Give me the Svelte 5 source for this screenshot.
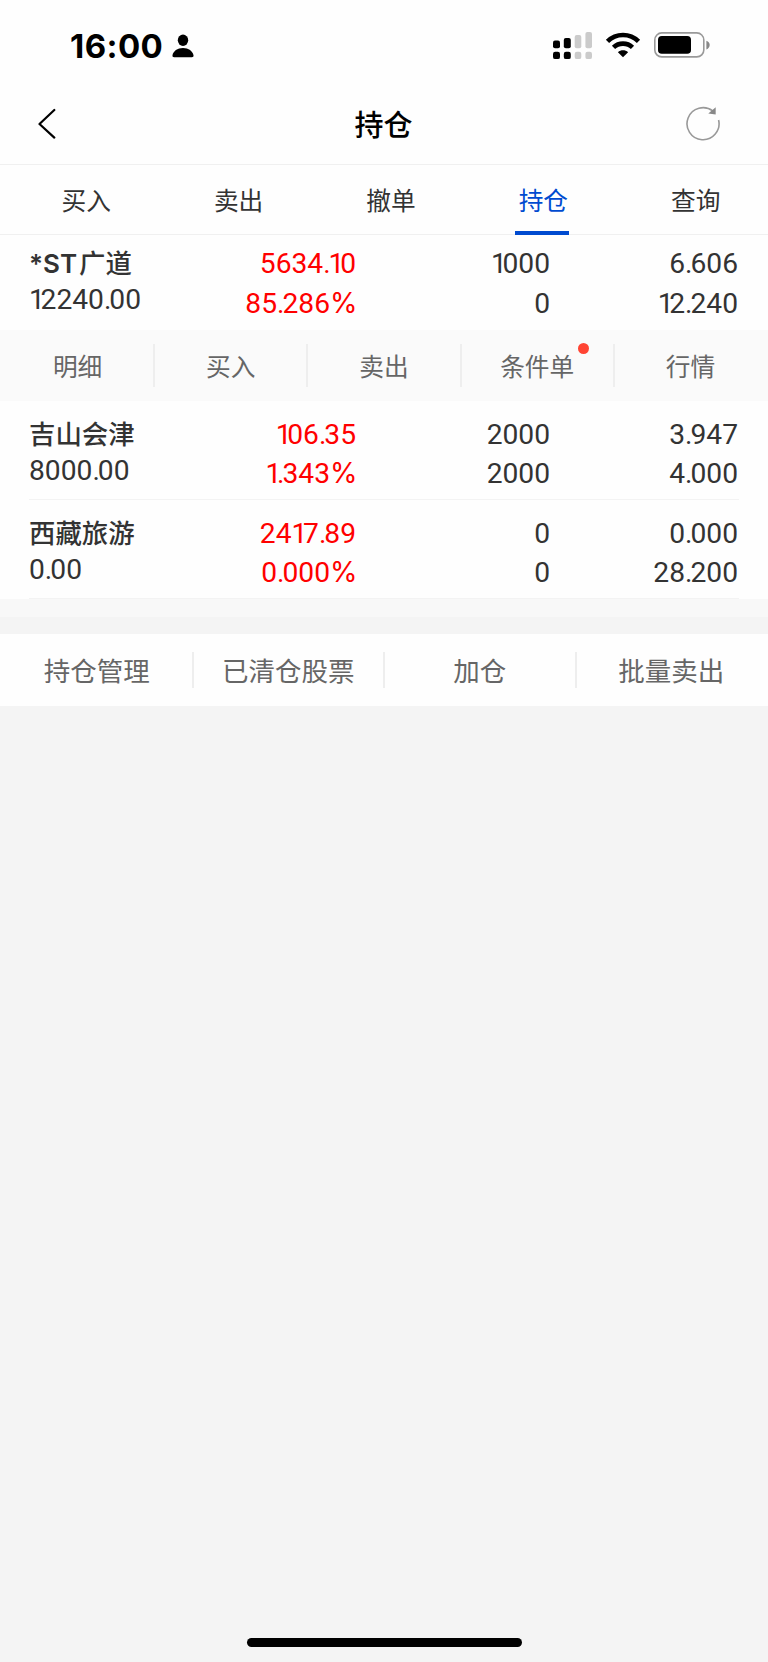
<script lang="ts">
  type Holding = {
    prefix?: string;
    name: string;
    value: string;
    profit: string;
    rate: string;
    amount: string;
    available: string;
    cost: string;
    price: string;
  };

  const tabs = ['买入', '卖出', '撤单', '持仓', '查询'];
  const actions = ['明细', '买入', '卖出', '条件单', '行情'];
  const tools = ['持仓管理', '已清仓股票', '加仓', '批量卖出'];

  const holdings: Holding[] = [
    { prefix: '*ST', name: '广道', value: '12240.00', profit: '5634.10', rate: '85.286%', amount: '1000', available: '0', cost: '6.606', price: '12.240' },
    { name: '吉山会津', value: '8000.00', profit: '106.35', rate: '1.343%', amount: '2000', available: '2000', cost: '3.947', price: '4.000' },
    { name: '西藏旅游', value: '0.00', profit: '2417.89', rate: '0.000%', amount: '0', available: '0', cost: '0.000', price: '28.200' }
  ];

  let activeTab = $state('持仓');
  let expanded = $state(0);
</script>

<!-- the "1" and the point are set tighter than the other figures -->
{#snippet num(text: string)}
  <span class="num">{#each text as ch}<span class:one={ch === '1'} class:dot={ch === '.'} class:pct={ch === '%'}>{ch}</span>{/each}</span>
{/snippet}

<div class="screen">
  <div class="status">
    <span class="clock">16:00</span>
    <svg class="person" width="22" height="24" viewBox="0 0 22 24">
      <ellipse cx="11" cy="6.2" rx="5.2" ry="5.7" />
      <path d="M2.2 23.2C.8 23.2.3 22.5.5 21.3 1.2 17 5.5 13.9 11 13.9s9.8 3.1 10.5 7.4c.2 1.2-.3 1.9-1.7 1.9z" />
    </svg>
    <svg class="signal" width="40" height="28" viewBox="0 0 40 28">
      <rect x="0" y="8.5" width="7" height="7.8" rx="2" />
      <rect x="10.8" y="6" width="7" height="10.3" rx="2" />
      <g fill="#cbcbcb">
        <rect x="21.7" y="3" width="6.6" height="13.3" rx="2" />
        <rect x="32.4" y="0" width="6.6" height="16.3" rx="2" />
        <rect x="21.7" y="19.8" width="6.6" height="7.3" rx="2.2" />
        <rect x="32.4" y="19.8" width="6.6" height="7.3" rx="2.2" />
      </g>
      <rect x="0" y="19.8" width="7" height="7.3" rx="2.2" />
      <rect x="10.8" y="19.8" width="7" height="7.3" rx="2.2" />
    </svg>
    <svg class="wifi" width="36" height="26" viewBox="0 0 36 26">
      <g fill="none" stroke="#000" stroke-width="4.6">
        <path d="M2.5 9.3C11 .8 25 .8 33.5 9.3" />
        <path d="M8.5 15.4c5.3-5 13.7-5 19 0" />
      </g>
      <path d="M18 25.2l-5.1-4.9c2.9-2.6 7.3-2.6 10.2 0z" />
    </svg>
    <svg class="battery" width="56" height="26" viewBox="0 0 56 26">
      <rect x=".8" y=".9" width="49" height="24" rx="7" fill="none" stroke="#999" stroke-width="1.6" />
      <rect x="4" y="4.1" width="33" height="17.6" rx="3.8" />
      <path d="M52.4 8.8c4.4 1.2 4.4 7.4 0 8.6z" fill="#888" />
    </svg>
  </div>

  <header>
    <button class="back" aria-label="返回">
      <svg width="18" height="32" viewBox="0 0 18 32" fill="none" stroke="#000" stroke-width="2.2" stroke-linecap="round" stroke-linejoin="round">
        <path d="M16.3 2L1.5 16l14.8 13.6" />
      </svg>
    </button>
    <h1>持仓</h1>
    <button class="refresh" aria-label="刷新">
      <svg width="36" height="36" viewBox="0 0 36 36">
        <path d="M28 5.2A16 16 0 1 0 33.6 14" fill="none" stroke="#999" stroke-width="1.6" />
        <path d="M30.7 1.2v7.4l-7.4-1z" fill="#888" />
      </svg>
    </button>
  </header>

  <nav class="tabs">
    {#each tabs as tab}
      <button class="tab" class:active={tab === activeTab} onclick={() => (activeTab = tab)}>{tab}</button>
    {/each}
  </nav>

  <main>
    {#each holdings as item, i}
      <div class="holding" class:expanded={i === expanded} class:first={i === 0}>
        <div class="col left">
          <span class="name">{#if item.prefix}<span class="prefix">{item.prefix}</span>{/if}{item.name}</span>
          {@render num(item.value)}
        </div>
        <div class="col red">
          {@render num(item.profit)}
          {@render num(item.rate)}
        </div>
        <div class="col">
          {@render num(item.amount)}
          {@render num(item.available)}
        </div>
        <div class="col">
          {@render num(item.cost)}
          {@render num(item.price)}
        </div>
      </div>
      {#if i === expanded}
        <div class="actions">
          {#each actions as action}
            <button class="action"><span class:badge={action === '条件单'}>{action}</span></button>
          {/each}
        </div>
      {/if}
    {/each}
  </main>

  <div class="gap"></div>

  <div class="tools">
    {#each tools as tool}
      <button class="tool">{tool}</button>
    {/each}
  </div>

  <div class="home"></div>
</div>

<style>
  :global(body) {
    background: #f4f4f4;
  }

  .screen {
    display: flex;
    flex-direction: column;
    width: 768px;
    height: 1662px;
    overflow: hidden;
    background: #f4f4f4;
    color: #333;
    font-family: Roboto, 'Noto Sans CJK SC', sans-serif;
  }

  button {
    padding: 0;
    border: none;
    background: none;
    color: inherit;
    font-family: 'Noto Sans CJK SC', sans-serif;
    cursor: pointer;
  }

  svg {
    display: block;
  }

  .status {
    display: flex;
    align-items: flex-start;
    height: 84px;
    box-sizing: border-box;
    padding: 32px 60px 0 70px;
    background: #fefefe;
  }

  .clock {
    width: 94px;
    margin-top: -1px;
    font: 700 33px/30px Inter, sans-serif;
    letter-spacing: 0.4px;
    color: #000;
    white-space: nowrap;
  }

  .person {
    margin: 2px 0 0 8px;
  }

  .signal {
    margin-left: auto;
  }

  .wifi {
    margin: 0 0 0 12px;
  }

  .battery {
    margin: 0 -2px 0 13px;
  }

  header {
    display: flex;
    align-items: center;
    justify-content: space-between;
    height: 81px;
    box-sizing: border-box;
    padding: 0 47px 1px 38px;
    border-bottom: 1px solid #f0f0f0;
    background: #fefefe;
  }

  .back {
    width: 46px;
  }

  h1 {
    margin: -1px 0 0 -2px;
    font: 500 29px/40px 'Noto Sans CJK SC', sans-serif;
    color: #000;
  }

  .tabs {
    display: flex;
    height: 70px;
    box-sizing: border-box;
    padding-left: 10px;
    border-bottom: 1px solid #f0f0f0;
    background: #fefefe;
  }

  .tab {
    position: relative;
    flex: 0 0 152.4px;
    padding-bottom: 2px;
    font-size: 24.7px;
  }

  .tab.active {
    color: #004bd0;
  }

  .tab.active::after {
    content: '';
    position: absolute;
    bottom: -1px;
    left: 48px;
    width: 54px;
    height: 4px;
    background: #004bd0;
  }

  .holding {
    display: grid;
    grid-template-columns: 170px 157px 194px 188px;
    position: relative;
    height: 99px;
    box-sizing: border-box;
    padding: 14px 29px 0;
    background: #fefefe;
  }

  .holding::after {
    content: '';
    position: absolute;
    right: 29px;
    bottom: 0;
    left: 29px;
    height: 1px;
    background: #f3f3f3;
  }

  .holding.first {
    height: 95px;
    padding-top: 9.4px;
  }

  .holding.expanded::after {
    display: none;
  }

  .col {
    display: flex;
    flex-direction: column;
    align-items: flex-end;
    line-height: 39.3px;
  }

  .col.left {
    align-items: flex-start;
  }

  .left .num {
    margin-top: -3.5px;
  }

  .red {
    color: #f00;
  }

  .name {
    font-family: Inter, 'Noto Sans CJK SC', sans-serif;
    font-size: 26.4px;
    font-weight: 500;
    white-space: nowrap;
  }

  .prefix {
    margin-right: 2px;
    font-size: 26px;
    font-weight: 600;
  }

  .num {
    font-size: 28.2px;
    white-space: nowrap;
  }

  .one {
    letter-spacing: -4.3px;
  }

  .dot {
    letter-spacing: -2px;
  }

  .pct {
    font-family: Inter, sans-serif;
    font-size: 28px;
    line-height: 1;
    letter-spacing: -1.5px;
  }

  .actions {
    display: flex;
    align-items: center;
    height: 71px;
    box-sizing: border-box;
    padding-left: 2px;
    background: #fafafa;
  }

  .action {
    flex: 1;
    height: 43px;
    padding-bottom: 2px;
    border-right: 2px solid #eee;
    color: #666;
    font-size: 24.7px;
  }

  .action:last-child {
    border-right-color: transparent;
  }

  .badge {
    position: relative;
  }

  .badge::after {
    content: '';
    position: absolute;
    top: -4px;
    right: -15px;
    width: 11px;
    height: 11px;
    border-radius: 50%;
    background: #ff4433;
  }

  .gap {
    height: 17px;
    border-top: 18px solid #f8f8f8;
    background: #f4f4f4;
  }

  .tools {
    display: flex;
    align-items: center;
    height: 72px;
    box-sizing: border-box;
    padding-left: 2px;
    background: #fefefe;
  }

  .tool {
    flex: 1;
    height: 36px;
    border-right: 2px solid #eee;
    color: #666;
    font-size: 26.5px;
    line-height: 30px;
    padding-bottom: 1px;
  }

  .tool:last-child {
    border-right-color: transparent;
  }

  .home {
    width: 275px;
    height: 9px;
    margin: auto auto 15px 247px;
    border-radius: 5px;
    background: #000;
  }
</style>
